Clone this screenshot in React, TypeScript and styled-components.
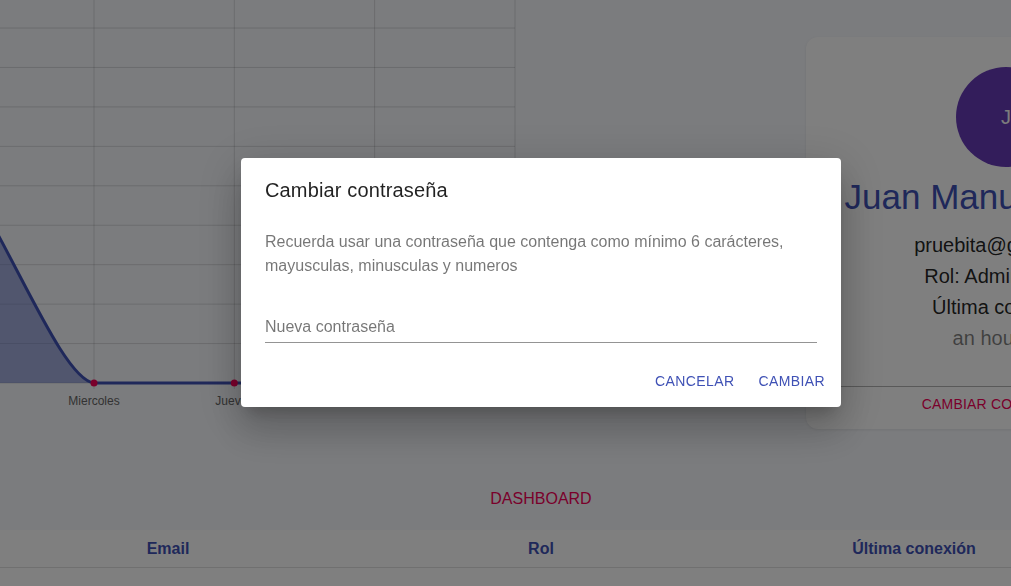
import React from "react";
import styled, { createGlobalStyle } from "styled-components";

const GlobalStyle = createGlobalStyle`
  html, body {
    margin: 0;
    padding: 0;
    width: 100%;
    height: 100%;
    overflow: hidden;
  }
  body {
    background: #f6f8fc;
    font-family: "Liberation Sans", Arial, Helvetica, sans-serif;
  }
  * { box-sizing: border-box; }
`;

const Page = styled.div`
  width: 1082px;
  min-height: 586px;
  display: flex;
  flex-direction: column;
`;

const TopRow = styled.div`
  display: flex;
  align-items: flex-start;
`;

const ChartBox = styled.div`
  width: 516px;
  height: 410px;
  flex: none;
  svg { display: block; overflow: visible; }
`;

const ProfileCard = styled.div`
  flex: none;
  width: 400px;
  margin-left: 290px;
  margin-top: 37px;
  background: #ffffff;
  border-radius: 12px;
  box-shadow: 0 1px 3px 0 rgba(0,0,0,0.08);
  display: flex;
  flex-direction: column;
  align-items: center;
  padding-top: 30px;
  padding-bottom: 8px;
`;

const Avatar = styled.div`
  width: 100px;
  height: 100px;
  border-radius: 50%;
  background: #673ab7;
  color: #fafafa;
  font-size: 20px;
  display: flex;
  align-items: center;
  justify-content: center;
`;

const Name = styled.div`
  margin-top: 9px;
  font-size: 35px;
  line-height: 42px;
  color: #3f51b5;
  white-space: nowrap;
`;

const InfoList = styled.div`
  margin-top: 12px;
  padding-bottom: 32px;
  display: flex;
  flex-direction: column;
  align-items: center;
  width: 100%;
  border-bottom: 1px solid rgba(0,0,0,0.3);
`;

const InfoLine = styled.div<{ $muted?: boolean }>`
  font-size: 20px;
  line-height: 31px;
  white-space: nowrap;
  color: ${(p) => (p.$muted ? "rgba(0,0,0,0.5)" : "rgba(0,0,0,0.87)")};
`;

const CardButton = styled.button`
  height: 34px;
  border: none;
  background: transparent;
  font-family: inherit;
  font-size: 14px;
  letter-spacing: 0.2px;
  text-transform: uppercase;
  color: #f50057;
  padding: 0 8px;
  white-space: nowrap;
`;

const SectionTitle = styled.div`
  margin-top: 58px;
  text-align: center;
  font-size: 16px;
  line-height: 24px;
  color: #f50057;
  text-transform: uppercase;
`;

const Table = styled.div`
  margin-top: 19px;
  background: #ffffff;
  flex: 1;
  min-height: 60px;
`;

const HeaderRow = styled.div`
  display: grid;
  grid-template-columns: 336px 410px 1fr;
  height: 38px;
  padding-top: 1px;
  border-bottom: 1px solid #e0e0e0;
  align-items: center;
`;

const HeaderCell = styled.div`
  text-align: center;
  font-size: 16px;
  font-weight: 700;
  color: #3f51b5;
`;

const Backdrop = styled.div`
  position: fixed;
  inset: 0;
  background: rgba(0,0,0,0.5);
`;

const DialogLayer = styled.div`
  position: fixed;
  left: 0;
  top: 0;
  width: 1082px;
  height: 565px;
  display: flex;
  align-items: center;
  justify-content: center;
`;

const Dialog = styled.div`
  width: 600px;
  background: #ffffff;
  border-radius: 4px;
  box-shadow: 0px 11px 15px -7px rgba(0,0,0,0.2), 0px 24px 38px 3px rgba(0,0,0,0.14), 0px 9px 46px 8px rgba(0,0,0,0.12);
  display: flex;
  flex-direction: column;
`;

const DialogTitle = styled.h2`
  margin: 0;
  padding: 16px 24px;
  font-size: 20px;
  line-height: 32px;
  font-weight: 500;
  letter-spacing: 0.15px;
  color: rgba(0,0,0,0.87);
`;

const DialogContent = styled.div`
  padding: 8px 24px 12px;
  display: flex;
  flex-direction: column;
`;

const DialogText = styled.p`
  margin: 0;
  font-size: 16px;
  line-height: 24px;
  color: rgba(0,0,0,0.54);
`;

const Field = styled.label`
  margin-top: 17px;
  height: 48px;
  padding-top: 24px;
  border-bottom: 1px solid rgba(0,0,0,0.42);
  font-size: 16px;
  line-height: 16px;
  color: rgba(0,0,0,0.54);
  display: block;
`;

const DialogActions = styled.div`
  padding: 8px;
  display: flex;
  justify-content: flex-end;
  gap: 8px;
`;

const TextButton = styled.button`
  height: 36px;
  padding: 6px 8px;
  border: none;
  background: transparent;
  border-radius: 4px;
  font-family: inherit;
  font-size: 14px;
  font-weight: 500;
  letter-spacing: 0.4px;
  text-transform: uppercase;
  color: #3f51b5;
`;

const ChartLabel = styled.text`
  font-family: "Liberation Sans", Arial, sans-serif;
  font-size: 12px;
  fill: #666666;
`;

const xs = [-46, 94, 234.3, 374.6, 515];
const labels = ["Martes", "Miercoles", "Jueves", "Viernes", "Sabado"];
const baseY = 383;
const step = 39.44;

function Chart() {
  const hLines = Array.from({ length: 10 }, (_, i) => baseY - i * step);
  const curve = "M -10 220 C 30 292, 68 380, 94 383";
  return (
    <svg width="516" height="410" viewBox="0 0 516 410">
      {hLines.map((y, i) => (
        <line key={"h" + i} x1="0" x2="515" y1={y} y2={y} stroke="rgba(0,0,0,0.13)" strokeWidth="1" />
      ))}
      {xs.slice(1).map((x, i) => (
        <line key={"v" + i} x1={x} x2={x} y1="0" y2={baseY + 6} stroke="rgba(0,0,0,0.13)" strokeWidth="1" />
      ))}
      <path d={`${curve} L 515 383 L -10 383 Z`} fill="rgba(63,81,181,0.45)" />
      <path d={`${curve} L 515 383`} fill="none" stroke="#3f51b5" strokeWidth="3" />
      {xs.slice(1).map((x, i) => (
        <circle key={"p" + i} cx={x} cy={baseY} r="3.5" fill="#f50057" />
      ))}
      {xs.slice(1).map((x, i) => (
        <ChartLabel key={"l" + i} x={x} y="405" textAnchor="middle">
          {labels[i + 1]}
        </ChartLabel>
      ))}
    </svg>
  );
}

export default function App() {
  return (
    <>
      <GlobalStyle />
      <Page>
        <TopRow>
          <ChartBox>
            <Chart />
          </ChartBox>
          <ProfileCard>
            <Avatar>J</Avatar>
            <Name>Juan Manuel Gómez</Name>
            <InfoList>
              <InfoLine>pruebita@gmail.com</InfoLine>
              <InfoLine>Rol: Administrador</InfoLine>
              <InfoLine>Última conexión:</InfoLine>
              <InfoLine $muted>an hour ago</InfoLine>
            </InfoList>
            <CardButton>Cambiar contraseña</CardButton>
          </ProfileCard>
        </TopRow>
        <SectionTitle>Dashboard</SectionTitle>
        <Table>
          <HeaderRow>
            <HeaderCell>Email</HeaderCell>
            <HeaderCell>Rol</HeaderCell>
            <HeaderCell>Última conexión</HeaderCell>
          </HeaderRow>
        </Table>
      </Page>
      <Backdrop />
      <DialogLayer>
        <Dialog role="dialog">
          <DialogTitle>Cambiar contraseña</DialogTitle>
          <DialogContent>
            <DialogText>
              Recuerda usar una contraseña que contenga como mínimo 6 carácteres, mayusculas, minusculas y numeros
            </DialogText>
            <Field>Nueva contraseña</Field>
          </DialogContent>
          <DialogActions>
            <TextButton>Cancelar</TextButton>
            <TextButton>Cambiar</TextButton>
          </DialogActions>
        </Dialog>
      </DialogLayer>
    </>
  );
}
